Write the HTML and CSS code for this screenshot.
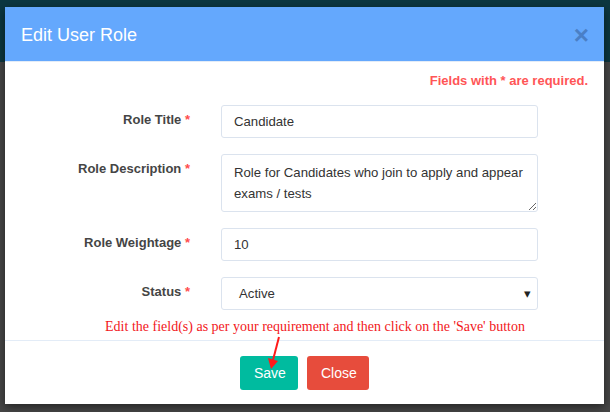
FILE: index.html
```html
<!DOCTYPE html>
<html>
<head>
<meta charset="utf-8">
<link rel="stylesheet" href="styles.css">
</head>
<body>
<div class="backdrop">
  <div class="bg-top"></div>
  <div class="modal">
    <div class="modal-header">
      <h4 class="modal-title">Edit User Role</h4>
      <span class="close-x">&times;</span>
    </div>
    <div class="modal-body">
      <p class="required-note">Fields with * are required.</p>
      <div class="form-grid">
        <label class="form-label">Role Title <span class="req">*</span></label>
        <div class="form-field"><input class="form-control" type="text" value="Candidate"></div>

        <label class="form-label">Role Description <span class="req">*</span></label>
        <div class="form-field"><textarea class="form-control textarea">Role for Candidates who join to apply and appear exams / tests</textarea></div>

        <label class="form-label">Role Weightage <span class="req">*</span></label>
        <div class="form-field"><input class="form-control" type="text" value="10"></div>

        <label class="form-label">Status <span class="req">*</span></label>
        <div class="form-field">
          <div class="form-control select">
            <span>Active</span>
            <span class="caret">&#9662;</span>
          </div>
        </div>
      </div>
      <p class="hint">Edit the field(s) as per your requirement and then click on the 'Save' button</p>
    </div>
    <div class="modal-footer">
      <button class="btn btn-save">Save</button>
      <button class="btn btn-close">Close</button>
    </div>
    <svg class="arrow" width="20" height="36" viewBox="0 0 20 36">
      <line x1="12" y1="1" x2="6" y2="24" stroke="#ff1a1a" stroke-width="2"/>
      <polygon points="1,22 11,25 4,33" fill="#ff1a1a"/>
    </svg>
  </div>
</div>
</body>
</html>
```

FILE: styles.css
```css
* { box-sizing: border-box; }
html, body {
  margin: 0;
  padding: 0;
  width: 610px;
  height: 412px;
  overflow: hidden;
}
body {
  font-family: "Liberation Sans", Arial, sans-serif;
  background: #474747;
}
.backdrop {
  position: relative;
  width: 610px;
  height: 412px;
  padding: 7px 6px 0 5px;
}
.bg-top {
  position: absolute;
  left: 0;
  top: 0;
  width: 610px;
  height: 62px;
  background: #0c3740;
}
.modal {
  position: relative;
  width: 599px;
  height: 397px;
  background: #fff;
  box-shadow: 0 3px 9px rgba(0, 0, 0, 0.5);
  display: flex;
  flex-direction: column;
}
.modal-header {
  height: 55px;
  background: #64a8fd;
  border-bottom: 1px solid #e3ecf7;
  display: flex;
  align-items: center;
  justify-content: space-between;
  padding: 0 16px 0 16px;
}
.modal-title {
  margin: 0;
  color: #fff;
  font-weight: normal;
  font-size: 18px;
  line-height: 20px;
  padding-top: 1px;
}
.close-x {
  color: #4a7fc6;
  font-size: 26px;
  font-weight: bold;
  line-height: 20px;
  margin-right: -1px;
  margin-top: 1px;
}
.modal-body {
  padding: 11px 16px 0 16px;
  border-bottom: 1px solid #e3ecf7;
  height: 279px;
}
.required-note {
  margin: 0;
  text-align: right;
  color: #ff5556;
  font-weight: bold;
  font-size: 13px;
  line-height: 16px;
}
.form-grid {
  display: grid;
  grid-template-columns: 169px 317px;
  column-gap: 31px;
  row-gap: 16px;
  margin-top: 16px;
  align-items: start;
}
.form-label {
  text-align: right;
  font-weight: bold;
  font-size: 13px;
  color: #454545;
  line-height: 18px;
  padding-top: 6px;
}
.req { color: #ff4d4d; }
.form-control {
  display: block;
  width: 317px;
  height: 33px;
  border: 1px solid #dbe3ee;
  border-radius: 3px;
  padding: 0 12px;
  font-family: "Liberation Sans", Arial, sans-serif;
  font-size: 13.2px;
  color: #333;
  background: #fff;
  outline: none;
}
.textarea {
  height: 58px;
  padding: 7px 12px;
  line-height: 21px;
  resize: vertical;
}
.form-grid .form-field:nth-of-type(8) { margin-top: 1px; }
.select {
  display: flex;
  align-items: center;
  justify-content: space-between;
  padding: 0 6px 0 17px;
}
.caret {
  font-size: 13px;
  color: #222;
}
.hint {
  margin: 8px 0 0 0;
  text-align: center;
  font-family: "Liberation Serif", "Times New Roman", serif;
  color: #f2171b;
  font-size: 14px;
  line-height: 17px;
  padding-left: 21px;
}
.modal-footer {
  flex: 1;
  display: flex;
  justify-content: center;
  align-items: flex-start;
  gap: 9px;
  padding-top: 15px;
}
.btn {
  height: 34px;
  border: 0;
  border-radius: 3px;
  color: #fff;
  font-family: "Liberation Sans", Arial, sans-serif;
  font-size: 14px;
  padding: 0 14px;
}
.btn-save { background: #00bb9f; width: 58px; }
.btn-close { background: #e74c3c; width: 62px; }
.arrow {
  position: absolute;
  left: 262px;
  top: 329px;
}
```
